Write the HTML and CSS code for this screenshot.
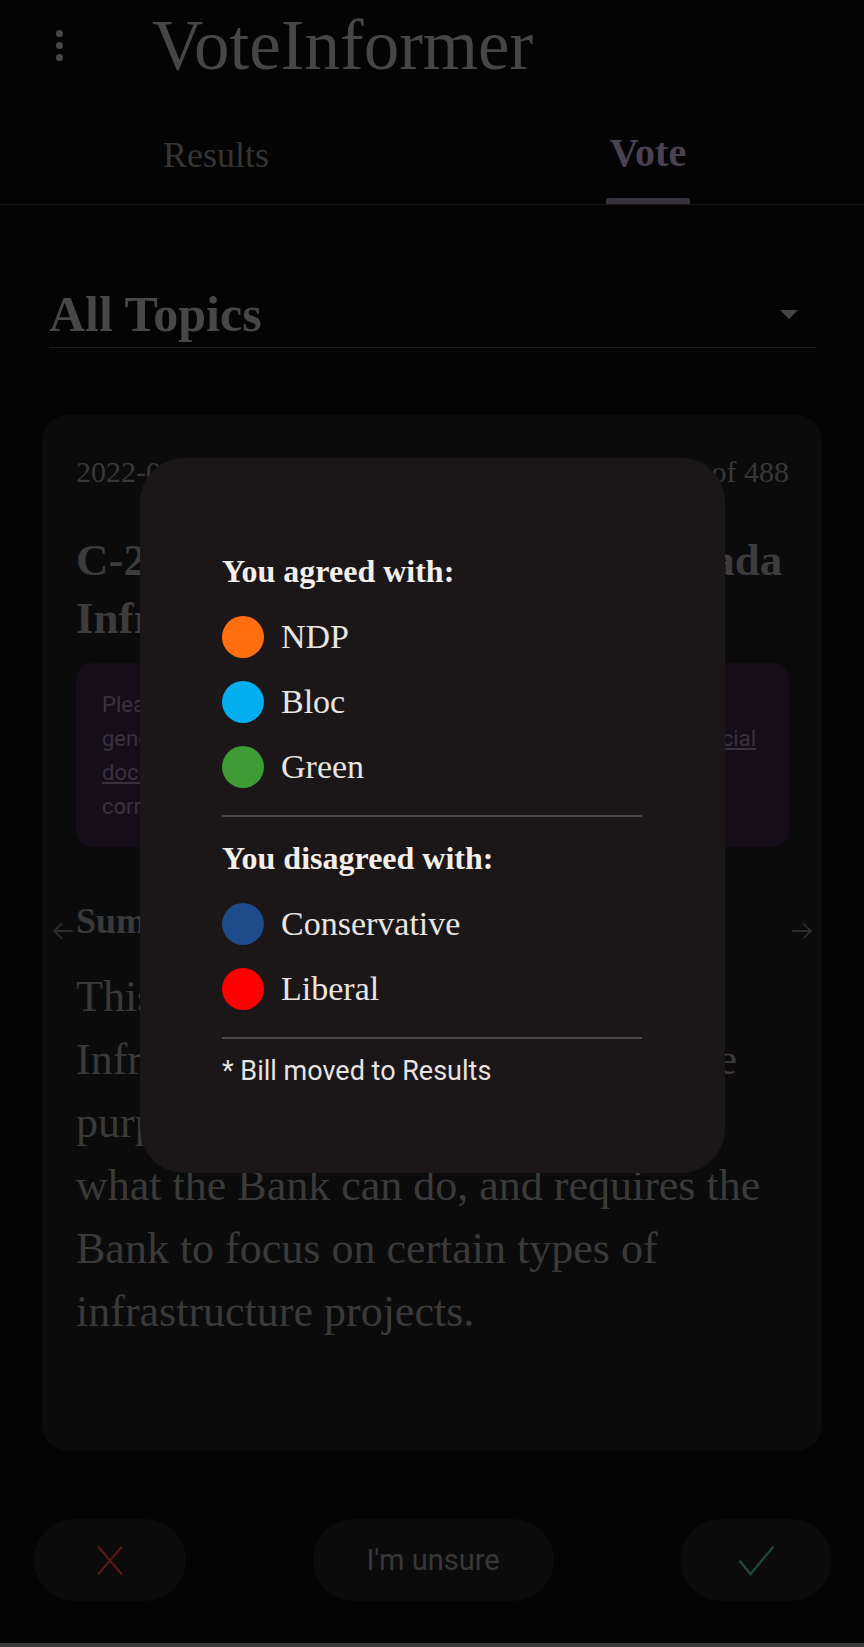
FILE: index.html
```html
<!DOCTYPE html>
<html lang="en">
<head>
<meta charset="utf-8">
<title>VoteInformer</title>
<link rel="stylesheet" href="styles.css">
</head>
<body>
<div class="screen">
  <header class="appbar">
    <div class="menu"><span></span><span></span><span></span></div>
    <h1 class="app-title">VoteInformer</h1>
  </header>
  <nav class="tabs">
    <div class="tab"><span class="tab-label">Results</span></div>
    <div class="tab active"><span class="tab-label">Vote</span><span class="indicator"></span></div>
  </nav>
  <main class="content">
    <div class="select">
      <span class="select-label">All Topics</span>
      <span class="caret"></span>
    </div>
    <article class="card">
      <div class="meta"><span>2022-06-15</span><span>1 of 488</span></div>
      <h2 class="bill-title">C-245 - An Act to amend the Canada<br>Infrastructure Bank Act</h2>
      <div class="notice">
        Please note: this bill summary was<br>
        generated automatically and may contain errors. Review the <a href="#">official<br>documents</a> for complete and<br>
        correct information.
      </div>
      <h3 class="section-label">Summary</h3>
      <p class="summary">This bill amends the Canada<br>Infrastructure Bank Act to change the<br>purpose of the Bank, limits<br>what the Bank can do, and requires the<br>Bank to focus on certain types of<br>infrastructure projects.</p>
      <button class="pager prev" aria-label="Previous">
        <svg width="28" height="26" viewBox="0 0 24 24"><path d="M21 12H4M11 5l-7 7 7 7" fill="none" stroke="#2c2c2c" stroke-width="1.8"/></svg>
      </button>
      <button class="pager next" aria-label="Next">
        <svg width="28" height="26" viewBox="0 0 24 24"><path d="M3 12h17M13 5l7 7-7 7" fill="none" stroke="#2c2c2c" stroke-width="1.8"/></svg>
      </button>
    </article>
  </main>
  <footer class="actions">
    <button class="act round" aria-label="Disagree">
      <svg width="28" height="31" viewBox="0 0 28 31"><path d="M2 1.5L26 29.5M26 1.5L2 29.5" stroke="#5c1818" stroke-width="2" fill="none"/></svg>
    </button>
    <button class="act wide">I'm unsure</button>
    <button class="act round" aria-label="Agree">
      <svg width="37" height="31" viewBox="0 0 37 31"><path d="M1.5 15.5L12.5 29L35.5 1.5" stroke="#1d4a33" stroke-width="2.4" fill="none"/></svg>
    </button>
  </footer>
  <div class="navbar"></div>
</div>

<div class="overlay">
  <div class="dialog">
    <div class="dialog-body">
      <h4 class="group-title">You agreed with:</h4>
      <ul class="party-list">
        <li class="party"><span class="dot ndp"></span>NDP</li>
        <li class="party"><span class="dot bloc"></span>Bloc</li>
        <li class="party"><span class="dot green"></span>Green</li>
      </ul>
      <hr class="divider">
      <h4 class="group-title second">You disagreed with:</h4>
      <ul class="party-list">
        <li class="party"><span class="dot cpc"></span>Conservative</li>
        <li class="party"><span class="dot lib"></span>Liberal</li>
      </ul>
      <hr class="divider">
      <p class="note">* Bill moved to Results</p>
    </div>
  </div>
</div>
</body>
</html>
```

FILE: styles.css
```css
html, body {
  margin: 0;
  padding: 0;
  background: #040404;
}

body {
  font-family: "Liberation Serif", "Times New Roman", serif;
}

.screen {
  width: 864px;
  height: 1647px;
  overflow: hidden;
  background: #040404;
}

/* App bar */
.appbar {
  height: 100px;
  display: flex;
  align-items: flex-start;
}

.menu {
  width: 7px;
  margin: 30px 0 0 56px;
  display: flex;
  flex-direction: column;
  gap: 5px;
}

.menu span {
  width: 7px;
  height: 7px;
  border-radius: 50%;
  background: #474747;
}

.app-title {
  margin: 10px 0 0 89px;
  font-size: 71px;
  line-height: 70px;
  font-weight: normal;
  color: #464646;
}

/* Tabs */
.tabs {
  display: grid;
  grid-template-columns: 1fr 1fr;
  height: 105px;
  box-sizing: border-box;
  border-bottom: 1px solid #161616;
}

.tab {
  display: flex;
  flex-direction: column;
  align-items: center;
  padding-top: 35px;
  font-size: 36px;
  line-height: 40px;
  color: #353535;
}

.tab.active {
  color: #4a4250;
  font-weight: bold;
  font-size: 40px;
  padding-top: 33px;
}

.indicator {
  margin-top: auto;
  width: 84px;
  height: 6px;
  border-radius: 3px 3px 0 0;
  background: #38313e;
}

/* Content */
.content {
  padding: 0 42px;
}

.select {
  margin: 87px 6px 0 7px;
  padding-bottom: 10px;
  display: flex;
  justify-content: space-between;
  align-items: flex-start;
  border-bottom: 1px solid #1d1d1d;
}

.select-label {
  font-size: 50px;
  line-height: 45px;
  font-weight: bold;
  color: #474747;
}

.caret {
  width: 0;
  height: 0;
  border-left: 9px solid transparent;
  border-right: 9px solid transparent;
  border-top: 9px solid #444444;
  margin: 18px 18px 0 0;
}

.card {
  position: relative;
  margin-top: 67px;
  height: 1036px;
  box-sizing: border-box;
  padding: 39px 33px 0 34px;
  background: #0b0b0b;
  border-radius: 26px;
  overflow: hidden;
}

.meta {
  display: flex;
  justify-content: space-between;
  font-size: 30px;
  line-height: 36px;
  color: #383838;
}

.bill-title {
  margin: 41px 0 0;
  font-size: 45px;
  line-height: 58px;
  font-weight: bold;
  color: #3c3c3c;
}

.notice {
  margin-top: 16px;
  padding: 25px 26px 23px;
  background: #150e18;
  border-radius: 16px;
  font-family: Roboto, "Liberation Sans", sans-serif;
  font-size: 22px;
  line-height: 34px;
  color: #3a313e;
}

.notice a {
  color: inherit;
  text-decoration: underline;
}

.section-label {
  margin: 54px 0 0;
  font-size: 36px;
  line-height: 40px;
  font-weight: bold;
  color: #3a3a3a;
}

.summary {
  margin: 24px 0 0;
  font-size: 44px;
  line-height: 63px;
  color: #3a3a3a;
}

.pager {
  position: absolute;
  top: 503px;
  width: 28px;
  height: 26px;
  padding: 0;
  border: 0;
  background: none;
  display: flex;
}

.pager.prev { left: 7px; }
.pager.next { right: 6px; }

/* Actions */
.actions {
  margin-top: 68px;
  display: flex;
  justify-content: space-between;
  padding: 0 32px 0 34px;
}

.act {
  height: 82px;
  border: 0;
  border-radius: 41px;
  background: #0b0b0b;
  display: flex;
  align-items: center;
  justify-content: center;
  padding: 0;
}

.act.round { width: 152px; }

.act.wide {
  width: 241px;
  font-family: Roboto, "Liberation Sans", sans-serif;
  font-size: 29px;
  color: #383838;
}

.navbar {
  margin-top: 42px;
  height: 4px;
  background: #3b3b3b;
}

/* Dialog */
.overlay {
  position: fixed;
  inset: 0;
  display: flex;
  justify-content: center;
  align-items: flex-start;
}

.dialog {
  margin-top: 458px;
  width: 585px;
  height: 715px;
  box-sizing: border-box;
  padding-top: 93px;
  background: #1b1718;
  border-radius: 44px;
}

.dialog-body {
  width: 420px;
  margin: 0 auto;
}

.group-title {
  margin: 0;
  font-size: 32px;
  line-height: 40px;
  font-weight: bold;
  color: #f2eeea;
}

.group-title.second {
  margin-top: 21px;
}

.party-list {
  list-style: none;
  margin: 25px 0 0;
  padding: 0;
  display: flex;
  flex-direction: column;
  gap: 23px;
}

.party {
  height: 42px;
  display: flex;
  align-items: center;
  gap: 17px;
  font-size: 34px;
  color: #e9e5e1;
}

.dot {
  width: 42px;
  height: 42px;
  border-radius: 50%;
  flex: none;
}

.dot.ndp { background: #ff6f10; }
.dot.bloc { background: #03aef0; }
.dot.green { background: #3d9c36; }
.dot.cpc { background: #1e4b8a; }
.dot.lib { background: #ff0000; }

.divider {
  margin: 27px 0 0;
  height: 2px;
  border: 0;
  background: #4a4547;
}

.note {
  margin: 17px 0 0;
  font-family: Roboto, "Liberation Sans", sans-serif;
  font-size: 27px;
  line-height: 30px;
  color: #e8e4e2;
}
```
